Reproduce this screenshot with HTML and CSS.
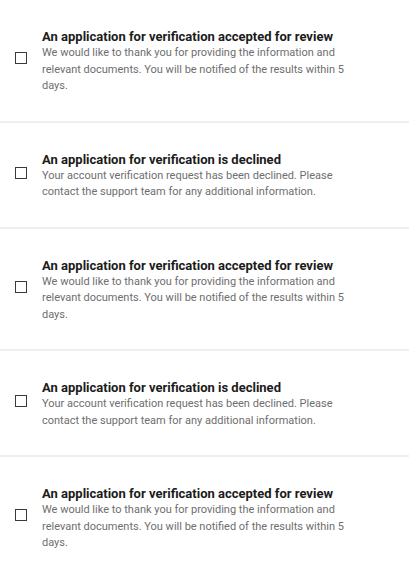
FILE: index.html
```html
<!DOCTYPE html>
<html>
<head>
<meta charset="utf-8">
<link rel="stylesheet" href="styles.css">
</head>
<body>
<ul class="list">
  <li class="item">
    <span class="check"></span>
    <div class="content">
      <div class="title">An application for verification accepted for review</div>
      <div class="body">We would like to thank you for providing the information and relevant documents. You will be notified of the results within 5 days.</div>
    </div>
  </li>
  <li class="item">
    <span class="check"></span>
    <div class="content">
      <div class="title">An application for verification is declined</div>
      <div class="body">Your account verification request has been declined. Please contact the support team for any additional information.</div>
    </div>
  </li>
  <li class="item">
    <span class="check"></span>
    <div class="content">
      <div class="title">An application for verification accepted for review</div>
      <div class="body">We would like to thank you for providing the information and relevant documents. You will be notified of the results within 5 days.</div>
    </div>
  </li>
  <li class="item">
    <span class="check"></span>
    <div class="content">
      <div class="title">An application for verification is declined</div>
      <div class="body">Your account verification request has been declined. Please contact the support team for any additional information.</div>
    </div>
  </li>
  <li class="item">
    <span class="check"></span>
    <div class="content">
      <div class="title">An application for verification accepted for review</div>
      <div class="body">We would like to thank you for providing the information and relevant documents. You will be notified of the results within 5 days.</div>
    </div>
  </li>
</ul>
</body>
</html>
```
FILE: styles.css
```css
html, body {
  margin: 0;
  padding: 0;
  background: #ffffff;
  font-family: Roboto, "Liberation Sans", sans-serif;
}
.list {
  list-style: none;
  margin: 0;
  padding: 0;
}
.item {
  display: flex;
  align-items: center;
  gap: 15px;
  padding: 28px 20px 26px 15px;
  border-bottom: 2px solid #efefef;
}
.check {
  flex: none;
  width: 10px;
  height: 10px;
  border: 1px solid #3a3a3a;
  margin-bottom: 6px;
}
.content {
  width: 305px;
}
.title {
  font-size: 13px;
  line-height: 17px;
  font-weight: 700;
  color: #1b1b1b;
  letter-spacing: 0;
  white-space: nowrap;
}
.body {
  font-size: 11px;
  line-height: 16.5px;
  color: #6e6e6e;
}
```
